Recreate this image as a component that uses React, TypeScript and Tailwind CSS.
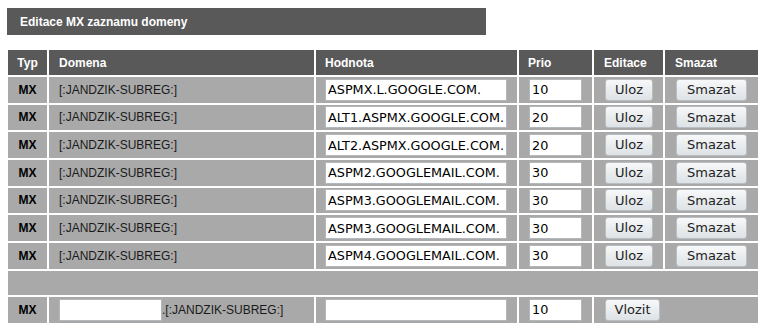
import React from 'react';

const records = [
    { value: 'ASPMX.L.GOOGLE.COM.', prio: '10' },
    { value: 'ALT1.ASPMX.GOOGLE.COM.', prio: '20' },
    { value: 'ALT2.ASPMX.GOOGLE.COM.', prio: '20' },
    { value: 'ASPM2.GOOGLEMAIL.COM.', prio: '30' },
    { value: 'ASPM3.GOOGLEMAIL.COM.', prio: '30' },
    { value: 'ASPM3.GOOGLEMAIL.COM.', prio: '30' },
    { value: 'ASPM4.GOOGLEMAIL.COM.', prio: '30' },
];

const cell = 'flex items-center bg-[#a9a9a9]';
const input =
    "h-[22px] border border-[#b3b8bd] bg-white pl-[2px] pr-0 font-['DejaVu_Sans',sans-serif] text-[12.8px] text-black outline-none";
const button =
    "h-[22px] rounded-[3px] border border-[#b9bec3] bg-gradient-to-b from-[#f7f8f9] to-[#dde2e6] font-['DejaVu_Sans',sans-serif] text-[13px] text-[#222]";

export default function App() {
    return (
        <div className="min-h-[330px] bg-white pt-[8px] pl-[7px] font-['Liberation_Sans',Arial,sans-serif]">
            {/* Title */}
            <div className="flex h-[27px] w-[479px] items-center bg-[#595959] pl-[13px] text-[12px] font-bold text-white">
                Editace MX zaznamu domeny
            </div>

            {/* Records */}
            <div className="mt-[15px] ml-[1px] grid w-[750px] grid-cols-[39px_265px_201px_73px_69px_93px] gap-[2px] text-[12px]">
                <div className="flex h-[25px] items-center justify-center bg-[#595959] font-bold text-white">Typ</div>
                <div className="flex h-[25px] items-center bg-[#595959] pl-[10px] font-bold text-white">Domena</div>
                <div className="flex h-[25px] items-center bg-[#595959] pl-[9px] font-bold text-white">Hodnota</div>
                <div className="flex h-[25px] items-center bg-[#595959] pl-[9px] font-bold text-white">Prio</div>
                <div className="flex h-[25px] items-center bg-[#595959] pl-[10px] font-bold text-white">Editace</div>
                <div className="flex h-[25px] items-center bg-[#595959] pl-[10px] font-bold text-white">Smazat</div>

                {records.map((r, i) => (
                    <React.Fragment key={i}>
                        <div className={`${cell} h-[25.67px] justify-center font-bold text-black`}>MX</div>
                        <div className={`${cell} pl-[10px] text-[#1a1a1a]`}>[:JANDZIK-SUBREG:]</div>
                        <div className={`${cell} pl-[9px]`}>
                            <input className={`${input} w-[182px]`} defaultValue={r.value} />
                        </div>
                        <div className={`${cell} pl-[10px]`}>
                            <input className={`${input} w-[53px]`} defaultValue={r.prio} />
                        </div>
                        <div className={`${cell} pl-[11px]`}>
                            <button className={`${button} w-[48px]`}>Uloz</button>
                        </div>
                        <div className={`${cell} pl-[11px]`}>
                            <button className={`${button} w-[71px]`}>Smazat</button>
                        </div>
                    </React.Fragment>
                ))}

                <div className="col-span-6 h-[24.33px] bg-[#a9a9a9]" />

                {/* New record */}
                <div className={`${cell} h-[26px] justify-center font-bold text-black`}>MX</div>
                <div className={`${cell} pl-[10px] text-[#1a1a1a]`}>
                    <input className={`${input} w-[103px]`} />
                    <span>.[:JANDZIK-SUBREG:]</span>
                </div>
                <div className={`${cell} pl-[9px]`}>
                    <input className={`${input} w-[182px]`} />
                </div>
                <div className={`${cell} pl-[10px]`}>
                    <input className={`${input} w-[53px]`} defaultValue="10" />
                </div>
                <div className={`${cell} col-span-2 pl-[11px]`}>
                    <button className={`${button} w-[55px]`}>Vlozit</button>
                </div>
            </div>
        </div>
    );
}
